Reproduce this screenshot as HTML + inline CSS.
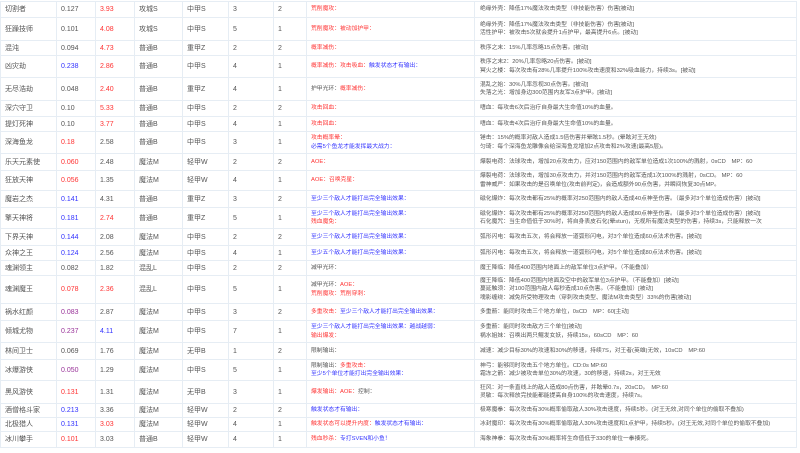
<!DOCTYPE html><html><head><meta charset="utf-8"><style>
body{margin:0;background:#fff;font-family:"Liberation Sans","Noto Sans CJK SC",sans-serif;color:#555;}
table{position:absolute;left:0;top:1px;border-collapse:collapse;table-layout:fixed;width:796px;}
td{border:1px solid #e6edf4;padding:0 0 0 4px;font-size:7px;line-height:9px;white-space:nowrap;overflow:hidden;vertical-align:middle}
td.d{font-size:5.8px;line-height:8.5px;padding-left:5px}
td.s{font-size:5.8px;line-height:8.5px}
.r{color:#f33}.b{color:#33f}.p{color:#939}
</style></head><body>
<table>
<colgroup><col style="width:56px"><col style="width:39px"><col style="width:39px"><col style="width:48px"><col style="width:46px"><col style="width:45px"><col style="width:33px"><col style="width:168px"><col style="width:322px"></colgroup>
<tr style="height:16px"><td>切割者</td><td>0.127</td><td class="r">3.93</td><td>攻城S</td><td>中甲S</td><td>3</td><td>2</td><td class="s r">荒削魔攻：</td><td class="d">绝缘外壳：降低17%魔法攻击类型（非技能伤害）伤害[被动]</td></tr>
<tr style="height:23px"><td>狂躁技师</td><td>0.101</td><td class="r">4.08</td><td>攻城S</td><td>中甲S</td><td>5</td><td>1</td><td class="s r">荒削魔攻：被动加护甲：</td><td class="d">绝缘外壳：降低17%魔法攻击类型（非技能伤害）伤害[被动]<br>活性护甲：被攻击5次就会提升1点护甲，最高提升6点。[被动]</td></tr>
<tr style="height:15px"><td>混沌</td><td>0.094</td><td class="r">4.73</td><td>普通B</td><td>重甲Z</td><td>2</td><td>2</td><td class="s r">概率减伤：</td><td class="d">秩序之末：15%几率忽略15点伤害。[被动]</td></tr>
<tr style="height:22px"><td>凶灾劫</td><td class="b">0.238</td><td class="r">2.86</td><td>普通B</td><td>中甲S</td><td>4</td><td>1</td><td class="s"><span class="r">概率减伤：攻击吸血：</span><span class="b">触发状态才有输出：</span></td><td class="d">秩序之末2：20%几率忽略20点伤害。[被动]<br>冥火之楼：每次攻击有28%几率提升100%攻击速度和32%吸血能力，持续3s。[被动]</td></tr>
<tr style="height:23px"><td>无尽浩劫</td><td>0.048</td><td class="r">2.40</td><td>普通B</td><td>重甲Z</td><td>4</td><td>1</td><td class="s">护甲光环：<span class="r">概率减伤：</span></td><td class="d">混乱之始：30%几率忽视30点伤害。[被动]<br>失落之光：增加身边300范围内友军3点护甲。[被动]</td></tr>
<tr style="height:16px"><td>深穴守卫</td><td>0.10</td><td class="r">5.33</td><td>普通B</td><td>中甲S</td><td>2</td><td>2</td><td class="s r">攻击回血：</td><td class="d">嗜血：每攻击6次后治疗自身最大生命值10%的血量。</td></tr>
<tr style="height:15px"><td>提灯死神</td><td>0.10</td><td class="r">3.77</td><td>普通B</td><td>中甲S</td><td>4</td><td>1</td><td class="s r">攻击回血：</td><td class="d">嗜血：每攻击4次后治疗自身最大生命值10%的血量。</td></tr>
<tr style="height:22px"><td>深海鱼龙</td><td class="r">0.18</td><td>2.58</td><td>普通B</td><td>中甲S</td><td>3</td><td>1</td><td class="s"><span class="r">攻击概率晕：</span><br><span class="b">必需5个鱼龙才能发挥最大战力：</span></td><td class="d">锤击：15%的概率对敌人造成1.5倍伤害并晕眩1.5秒。(晕眩对王无效)<br>匀琦：每个深海鱼龙雕像会给深海鱼龙增加2点攻击和2%攻速(最高5层)。</td></tr>
<tr style="height:17px"><td>乐天元素使</td><td class="r">0.060</td><td>2.48</td><td>魔法M</td><td>轻甲W</td><td>2</td><td>2</td><td class="s r">AOE：</td><td class="d">爆裂电荷：法球攻击，增加20点攻击力，应对150范围内的敌军单位造成1次100%的溅射，0sCD　MP：60</td></tr>
<tr style="height:20px"><td>狂放天神</td><td class="r">0.056</td><td>1.35</td><td>魔法M</td><td>轻甲W</td><td>4</td><td>1</td><td class="s r">AOE：召唤克星：</td><td class="d">爆裂电荷：法球攻击，增加30点攻击力，并对150范围内的敌军造成1次100%的溅射，0sCD。 MP：60<br>雷神威严：如果攻击的是召唤单位(攻击前判定)，会造成额外90点伤害，并瞬间恢复30点MP。</td></tr>
<tr style="height:17px"><td>魔岩之杰</td><td class="b">0.141</td><td>4.31</td><td>普通B</td><td>重甲Z</td><td>3</td><td>2</td><td class="s b">至少三个敌人才能打出完全输出效果：</td><td class="d">磁化爆炸：每次攻击都有25%的概率对250范围内的敌人造成40点神圣伤害。（最多对3个单位造成伤害）[被动]</td></tr>
<tr style="height:21px"><td>擎天神将</td><td class="b">0.181</td><td class="r">2.74</td><td>普通B</td><td>重甲Z</td><td>5</td><td>1</td><td class="s"><span class="b">至少三个敌人才能打出完全输出效果：</span><br><span class="r">残血魔免：</span></td><td class="d">磁化爆炸：每次攻击都有25%的概率对250范围内的敌人造成80点神圣伤害。（最多对3个单位造成伤害）[被动]<br>石化魔咒：当生命值低于30%时，将自身表皮石化(晕stun)，无视所有魔法类型的伤害，持续3s，只能释放一次</td></tr>
<tr style="height:17px"><td>下界天神</td><td class="b">0.144</td><td>2.08</td><td>魔法M</td><td>中甲S</td><td>2</td><td>2</td><td class="s b">至少三个敌人才能打出完全输出效果：</td><td class="d">弧形闪电：每攻击五次，将会释放一道弧形闪电，对3个单位造成60点法术伤害。[被动]</td></tr>
<tr style="height:15px"><td>众神之王</td><td class="b">0.124</td><td>2.56</td><td>魔法M</td><td>中甲S</td><td>4</td><td>1</td><td class="s b">至少五个敌人才能打出完全输出效果：</td><td class="d">弧形闪电：每攻击五次，将会释放一道弧形闪电，对5个单位造成80点法术伤害。[被动]</td></tr>
<tr style="height:15px"><td>魂渊领主</td><td>0.082</td><td>1.82</td><td>混乱L</td><td>中甲S</td><td>2</td><td>2</td><td class="s">减甲光环：</td><td class="d">魔王降临：降低400范围内地面上的敌军单位3点护甲。（不能叠加）</td></tr>
<tr style="height:28px"><td>魂渊魔王</td><td class="r">0.078</td><td class="r">2.36</td><td>混乱L</td><td>中甲S</td><td>5</td><td>1</td><td class="s">减甲光环：<span class="r">AOE：</span><br><span class="r">荒削魔攻：荒削穿刺：</span></td><td class="d">魔王降临：降低400范围内地面及空中的敌军单位3点护甲。（不能叠加）[被动]<br>蔓延触须：对100范围内敌人每秒造成10点伤害。（不能叠加）[被动]<br>魂影缠绕：减免所受物理攻击（穿刺攻击类型、魔法M攻击类型）33%的伤害[被动]</td></tr>
<tr style="height:17px"><td>祸水红颜</td><td class="p">0.083</td><td>2.87</td><td>魔法M</td><td>中甲S</td><td>3</td><td>2</td><td class="s"><span class="r">多重攻击：</span><span class="b">至少三个敌人才能打出完全输出效果：</span></td><td class="d">多重箭：能同时攻击三个地方单位，0sCD　MP：60[主动]</td></tr>
<tr style="height:22px"><td>倾城尤物</td><td class="p">0.237</td><td class="b">4.11</td><td>魔法M</td><td>中甲S</td><td>7</td><td>1</td><td class="s"><span class="b">至少三个敌人才能打出完全输出效果：越战越弱：</span><br><span class="r">输出爆发：</span></td><td class="d">多重箭：能同时攻击敌方三个单位[被动]<br>祸水姐妹：召唤出两只鲲发女妖，持续15s，60sCD　MP：60</td></tr>
<tr style="height:17px"><td>林间卫士</td><td>0.069</td><td>1.76</td><td>魔法M</td><td>无甲B</td><td>1</td><td>2</td><td class="s">限制输出：</td><td class="d">减速：减少目标30%的攻速和30%的移速，持续7S，对王者(英雄)无效，10sCD　MP:60</td></tr>
<tr style="height:21px"><td>冰爆游侠</td><td class="p">0.050</td><td>1.29</td><td>魔法M</td><td>中甲S</td><td>5</td><td>1</td><td class="s">限制输出：<span class="r">多重攻击：</span><br><span class="b">至少5个单位才能打出完全输出效果：</span></td><td class="d">神弓：能够同时攻击五个地方单位。CD:0s MP:60<br>霜冻之箭：减少被攻击单位30%的攻速，30的移速，持续2s，对王无效</td></tr>
<tr style="height:23px"><td>黑风游侠</td><td class="r">0.131</td><td>1.31</td><td>魔法M</td><td>无甲B</td><td>3</td><td>1</td><td class="s"><span class="r">爆发输出：AOE：</span>控制：</td><td class="d">狂风：对一条直线上的敌人造成80点伤害，并眩晕0.7s，20sCD。　MP:60<br>灵敏：每次释放完技能都能提高自身100%的攻击速度，持续7s。</td></tr>
<tr style="height:14px"><td>酒僧格斗家</td><td class="b">0.213</td><td>3.36</td><td>魔法M</td><td>轻甲W</td><td>2</td><td>2</td><td class="s b">触发状态才有输出：</td><td class="d">极寒魔拳：每次攻击有30%概率偷取敌人30%攻击速度，持续5秒。(对王无效,对同个单位的偷取不叠加)</td></tr>
<tr style="height:14px"><td>北极猎人</td><td class="b">0.131</td><td class="r">3.03</td><td>魔法M</td><td>轻甲W</td><td>4</td><td>1</td><td class="s"><span class="r">触发状态可以提升内度：</span><span class="b">触发状态才有输出：</span></td><td class="d">冰封魔印：每次攻击有30%概率偷取敌人30%攻击速度和1点护甲，持续5秒。(对王无效,对同个单位的偷取不叠加)</td></tr>
<tr style="height:16px"><td>冰川攀手</td><td class="r">0.101</td><td>3.03</td><td>普通B</td><td>轻甲W</td><td>4</td><td>1</td><td class="s"><span class="r">残血秒杀：</span><span class="b">专打SVEN和小鱼！</span></td><td class="d">海象神拳：每次攻击有30%概率将生命值低于330的单位一拳揍死。</td></tr>
</table></body></html>
